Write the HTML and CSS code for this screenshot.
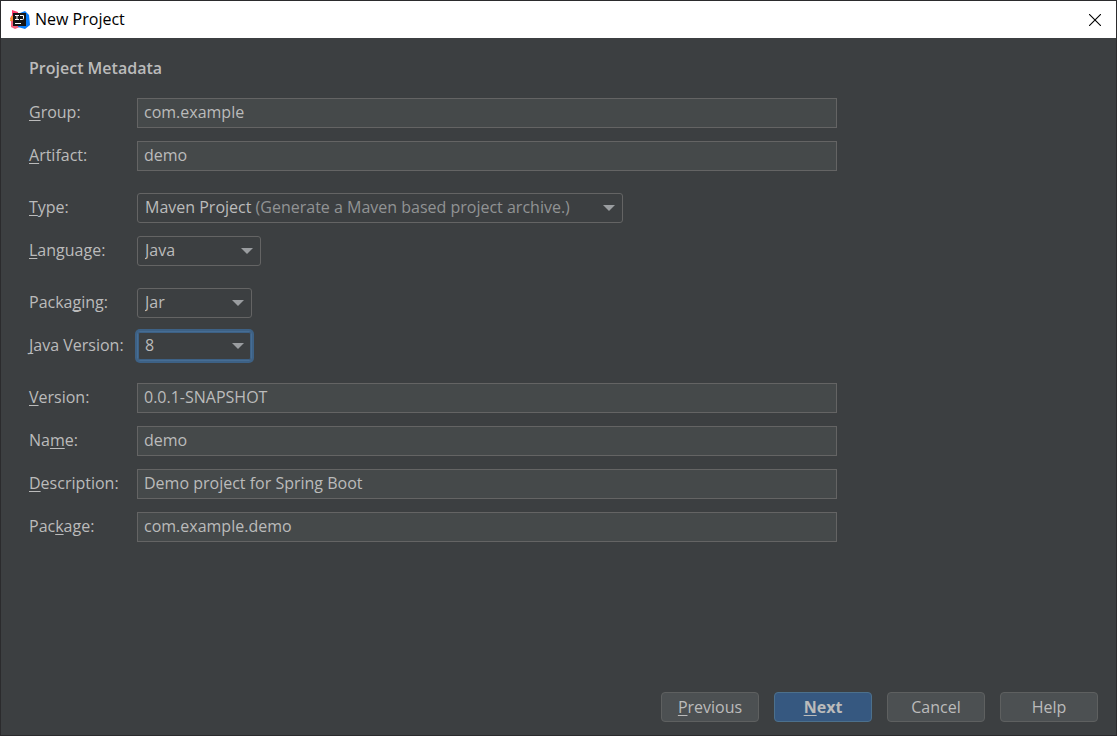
FILE: index.html
```
<!DOCTYPE html>
<html lang="en">
<head>
    <meta charset="utf-8">
    <title>New Project</title>
    <link rel="stylesheet" href="styles.css">
</head>
<body>
    <div class="dialog">
        <header class="titlebar">
            <svg class="app-icon" viewBox="0 0 20 20" aria-hidden="true">
                <path d="M2 0l6 2v7H0l2-4z" fill="#fc3f6b"/>
                <path d="M1 6h4v6l-5-1z" fill="#f98e32"/>
                <path d="M1 11h7l2 6-5 2-4-2z" fill="#f4607c"/>
                <path d="M10 3l5-2 4 4 1 10-5 4-7-2z" fill="#087cfa"/>
                <path d="M3 3h13v13H3z" fill="#161616"/>
                <path d="M5 5.500h4M7 5v5M5 9.500h4M10 5.500h3.500v3q0 1-1 1H10" fill="none" stroke="#fff"/>
                <path d="M5 13h6v1H5z" fill="#fff"/>
            </svg>
            <h1 class="title">New Project</h1>
            <button class="close" type="button" aria-label="Close">
                <svg viewBox="0 0 12 12" aria-hidden="true">
                    <path d="M0 0l12 12M12 0L0 12" stroke="#000" stroke-width="1.1"/>
                </svg>
            </button>
        </header>

        <form class="content">
            <h2 class="heading">Project Metadata</h2>

            <div class="group">
                <div class="row">
                    <label for="group"><u>G</u>roup:</label>
                    <input id="group" type="text" value="com.example">
                </div>
                <div class="row">
                    <label for="artifact"><u>A</u>rtifact:</label>
                    <input id="artifact" type="text" value="demo">
                </div>
            </div>

            <div class="group">
                <div class="row">
                    <label for="type"><u>T</u>ype:</label>
                    <div class="combo combo-wide">
                        <select id="type">
                            <option>Maven Project</option>
                        </select>
                        <span class="hint"><span class="hint-offset">Maven Project </span>(Generate a Maven based project archive.)</span>
                    </div>
                </div>
                <div class="row">
                    <label for="language"><u>L</u>anguage:</label>
                    <div class="combo combo-medium">
                        <select id="language">
                            <option>Java</option>
                        </select>
                    </div>
                </div>
            </div>

            <div class="group">
                <div class="row">
                    <label for="packaging">Packa<u>g</u>ing:</label>
                    <div class="combo combo-small">
                        <select id="packaging">
                            <option>Jar</option>
                        </select>
                    </div>
                </div>
                <div class="row">
                    <label for="java-version"><u>J</u>ava Version:</label>
                    <div class="combo combo-small focused">
                        <select id="java-version">
                            <option>8</option>
                        </select>
                    </div>
                </div>
            </div>

            <div class="group">
                <div class="row">
                    <label for="version"><u>V</u>ersion:</label>
                    <input id="version" type="text" value="0.0.1-SNAPSHOT">
                </div>
                <div class="row">
                    <label for="name">Na<u>m</u>e:</label>
                    <input id="name" type="text" value="demo">
                </div>
                <div class="row">
                    <label for="description"><u>D</u>escription:</label>
                    <input id="description" type="text" value="Demo project for Spring Boot">
                </div>
                <div class="row">
                    <label for="package">Pac<u>k</u>age:</label>
                    <input id="package" type="text" value="com.example.demo">
                </div>
            </div>
        </form>

        <footer class="actions">
            <button class="btn" type="button"><span><u>P</u>revious</span></button>
            <button class="btn btn-primary" type="button"><span><u>N</u>ext</span></button>
            <button class="btn" type="button">Cancel</button>
            <button class="btn" type="button">Help</button>
        </footer>
    </div>
</body>
</html>
```
FILE: styles.css
```
* {
    margin: 0;
    padding: 0;
    box-sizing: border-box;
}

body {
    font-family: "Segoe UI", "Open Sans", "Noto Sans", sans-serif;
    font-size: 16px;
    line-height: 22px;
    color: #bbb;
    background: #3c3f41;
}

.dialog {
    display: flex;
    flex-direction: column;
    min-height: 100vh;
    border: 1px solid #2b2b2d;
    background: #3c3f41;
}

.titlebar {
    display: flex;
    align-items: center;
    height: 37px;
    padding: 0 15px 0 9px;
    background: #fff;
    color: #000;
}

.app-icon {
    width: 20px;
    height: 20px;
    margin-right: 5px;
}

.title {
    flex: 1;
    padding-bottom: 2px;
    font-size: 16px;
    font-weight: 400;
}

.close {
    display: flex;
    border: none;
    background: none;
}

.close svg {
    width: 12px;
    height: 12px;
}

.content {
    flex: 1;
    padding: 19px 28px;
}

.heading {
    margin-bottom: 19px;
    font-size: 16px;
    font-weight: 600;
}

.group {
    display: grid;
    gap: 13px;
    margin-bottom: 22px;
}

.row {
    display: grid;
    grid-template-columns: 108px minmax(0, 700px);
    align-items: center;
}

.row label {
    padding-bottom: 2px;
}

u {
    text-decoration-thickness: 1px;
    text-underline-offset: 2px;
    text-decoration-skip-ink: none;
}

input,
select {
    width: 100%;
    height: 30px;
    font: inherit;
    color: #bbb;
    border: 1px solid #646464;
    outline: none;
}

input {
    padding: 0 6px 2px;
    background: #45494a;
}

select {
    display: block;
    padding: 0 7px 2px;
    appearance: none;
    border-radius: 3px;
    background: #3c3f41;
}

.combo {
    position: relative;
}

.combo::after {
    content: "";
    position: absolute;
    top: 12px;
    right: 8px;
    border: 6px solid transparent;
    border-top-color: #9a9da0;
    border-bottom: none;
    pointer-events: none;
}

.combo-wide {
    width: 486px;
    max-width: 100%;
}

.combo-medium {
    width: 124px;
}

.combo-small {
    width: 115px;
}

.focused select {
    border-color: #466d94;
    box-shadow: 0 0 0 2px #3d6185, inset 0 0 0 1px #3d6185;
}

.hint {
    position: absolute;
    top: 3px;
    left: 8px;
    color: #919394;
    white-space: nowrap;
    pointer-events: none;
}

.hint-offset {
    visibility: hidden;
}

.actions {
    display: flex;
    justify-content: flex-end;
    gap: 15px;
    padding: 0 18px 13px;
}

.btn {
    width: 98px;
    height: 30px;
    font: inherit;
    color: #bbb;
    border: 1px solid #5e6060;
    border-radius: 4px;
    background: #4c5052;
}

.btn-primary {
    font-weight: 700;
    border-color: #4c708c;
    background: #365880;
}
```
